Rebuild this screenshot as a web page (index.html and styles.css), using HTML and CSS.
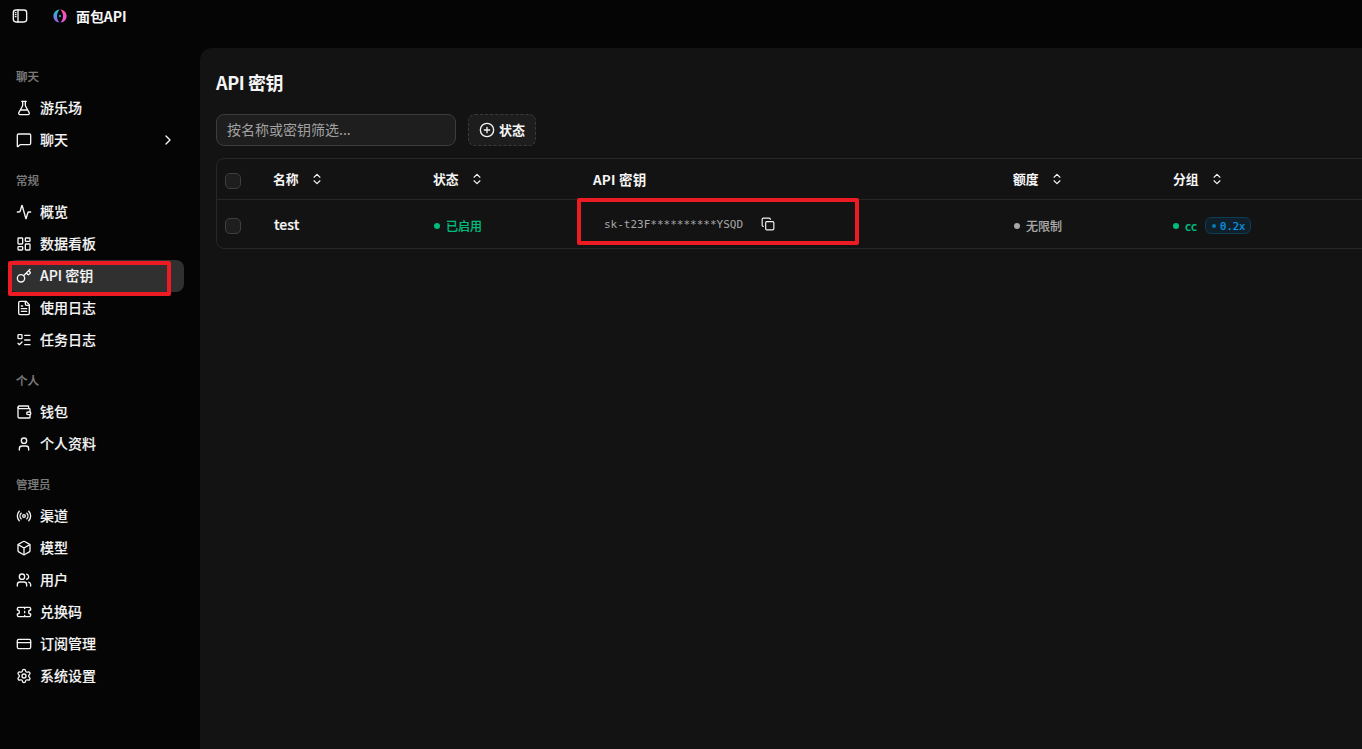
FILE: index.html
```html
<!DOCTYPE html>
<html lang="zh-CN">
<head>
    <meta charset="UTF-8">
    <meta name="viewport" content="width=device-width, initial-scale=1.0">
    <title>面包API</title>
    <link rel="stylesheet" href="styles.css">
</head>
<body>
    <header class="topbar">
        <svg class="icon" viewBox="0 0 24 24"><rect x="2" y="3" width="20" height="18" rx="4"/><path d="M9 3v18M5 7h1M5 10h1M5 13h1"/></svg>
        <svg class="logo" viewBox="0 0 16 16">
            <defs>
                <linearGradient id="cool" x1="0" y1="0" x2="0" y2="1"><stop offset="0" stop-color="#1cc8c8"/><stop offset="1" stop-color="#9a5cf0"/></linearGradient>
                <linearGradient id="warm" x1="0" y1="0" x2="0" y2="1"><stop offset="0" stop-color="#ff4f9a"/><stop offset="1" stop-color="#e65be0"/></linearGradient>
            </defs>
            <path fill="url(#cool)" d="M7.600 1.400C4 1.800 1.400 4.600 1.400 8s2.400 6.200 6 6.600C5.800 12.600 5 10.400 5 8S6 3.400 7.600 1.400z"/>
            <path fill="url(#warm)" d="M8.400 1.400c3.600.4 6.200 3.200 6.200 6.600s-2.400 6.200-6 6.600C10.200 12.600 11 10.400 11 8S10 3.400 8.400 1.400z"/>
            <circle cx="8" cy="8" r="1.200" fill="#1596b0"/>
        </svg>
        <span class="brand">面包API</span>
    </header>

    <div class="layout">
        <nav class="sidebar">
            <div class="group">
                <div class="group-label">聊天</div>
                <a class="item"><svg class="icon" viewBox="0 0 24 24"><path d="M14 2v6a2 2 0 0 0 .245.960l5.510 10.080A2 2 0 0 1 18 22H6a2 2 0 0 1-1.755-2.960l5.510-10.080A2 2 0 0 0 10 8V2M6.453 15h11.094M8.500 2h7"/></svg><span>游乐场</span></a>
                <a class="item"><svg class="icon" viewBox="0 0 24 24"><path d="M22 17a2 2 0 0 1-2 2H6.828a2 2 0 0 0-1.414.586l-2.202 2.202A.71.71 0 0 1 2 21.286V5a2 2 0 0 1 2-2h16a2 2 0 0 1 2 2z"/></svg><span>聊天</span><svg class="icon chevron" viewBox="0 0 24 24"><path d="m9 18 6-6-6-6"/></svg></a>
            </div>
            <div class="group">
                <div class="group-label">常规</div>
                <a class="item"><svg class="icon" viewBox="0 0 24 24"><path d="M22 12h-2.480a2 2 0 0 0-1.930 1.460l-2.350 8.360a.25.25 0 0 1-.480 0L9.240 2.180a.25.25 0 0 0-.480 0l-2.350 8.360A2 2 0 0 1 4.490 12H2"/></svg><span>概览</span></a>
                <a class="item"><svg class="icon" viewBox="0 0 24 24"><rect width="7" height="9" x="3" y="3" rx="1"/><rect width="7" height="5" x="14" y="3" rx="1"/><rect width="7" height="9" x="14" y="12" rx="1"/><rect width="7" height="5" x="3" y="16" rx="1"/></svg><span>数据看板</span></a>
                <a class="item active"><svg class="icon" viewBox="0 0 24 24"><path d="m15.500 7.500 2.300 2.300a1 1 0 0 0 1.400 0l2.100-2.100a1 1 0 0 0 0-1.400L19 4M21 2l-9.600 9.600"/><circle cx="7.500" cy="15.500" r="5.500"/></svg><span>API 密钥</span></a>
                <a class="item"><svg class="icon" viewBox="0 0 24 24"><path d="M15 2H6a2 2 0 0 0-2 2v16a2 2 0 0 0 2 2h12a2 2 0 0 0 2-2V7z"/><path d="M14 2v4a2 2 0 0 0 2 2h4M10 9H8M16 13H8M16 17H8"/></svg><span>使用日志</span></a>
                <a class="item"><svg class="icon" viewBox="0 0 24 24"><rect x="3" y="4" width="6" height="6" rx="1"/><path d="m3 17 2 2 4-4M13 5h8M13 12h8M13 19h8"/></svg><span>任务日志</span></a>
            </div>
            <div class="group">
                <div class="group-label">个人</div>
                <a class="item"><svg class="icon" viewBox="0 0 24 24"><path d="M19 7V4a1 1 0 0 0-1-1H5a2 2 0 0 0 0 4h15a1 1 0 0 1 1 1v4h-3a2 2 0 0 0 0 4h3a1 1 0 0 0 1-1v-2a1 1 0 0 0-1-1"/><path d="M3 5v14a2 2 0 0 0 2 2h15a1 1 0 0 0 1-1v-4"/></svg><span>钱包</span></a>
                <a class="item"><svg class="icon" viewBox="0 0 24 24"><path d="M19 21v-2a4 4 0 0 0-4-4H9a4 4 0 0 0-4 4v2"/><circle cx="12" cy="7" r="4"/></svg><span>个人资料</span></a>
            </div>
            <div class="group">
                <div class="group-label">管理员</div>
                <a class="item"><svg class="icon" viewBox="0 0 24 24"><path d="M16.247 7.761a6 6 0 0 1 0 8.478M19.075 4.933a10 10 0 0 1 0 14.134M4.925 19.067a10 10 0 0 1 0-14.134M7.753 16.239a6 6 0 0 1 0-8.478"/><circle cx="12" cy="12" r="2"/></svg><span>渠道</span></a>
                <a class="item"><svg class="icon" viewBox="0 0 24 24"><path d="M21 8a2 2 0 0 0-1-1.730l-7-4a2 2 0 0 0-2 0l-7 4A2 2 0 0 0 3 8v8a2 2 0 0 0 1 1.730l7 4a2 2 0 0 0 2 0l7-4A2 2 0 0 0 21 16z"/><path d="m3.300 7 8.700 5 8.700-5M12 22V12"/></svg><span>模型</span></a>
                <a class="item"><svg class="icon" viewBox="0 0 24 24"><path d="M16 21v-2a4 4 0 0 0-4-4H6a4 4 0 0 0-4 4v2M16 3.128a4 4 0 0 1 0 7.744M22 21v-2a4 4 0 0 0-3-3.870"/><circle cx="9" cy="7" r="4"/></svg><span>用户</span></a>
                <a class="item"><svg class="icon" viewBox="0 0 24 24"><path d="M2 9a3 3 0 0 1 0 6v2a2 2 0 0 0 2 2h16a2 2 0 0 0 2-2v-2a3 3 0 0 1 0-6V7a2 2 0 0 0-2-2H4a2 2 0 0 0-2 2zM13 5v2M13 17v2M13 11v2"/></svg><span>兑换码</span></a>
                <a class="item"><svg class="icon" viewBox="0 0 24 24"><rect width="20" height="14" x="2" y="5" rx="2"/><path d="M2 10h20"/></svg><span>订阅管理</span></a>
                <a class="item"><svg class="icon" viewBox="0 0 24 24"><path d="M9.671 4.136a2.340 2.340 0 0 1 4.659 0 2.340 2.340 0 0 0 3.319 1.915 2.340 2.340 0 0 1 2.330 4.033 2.340 2.340 0 0 0 0 3.831 2.340 2.340 0 0 1-2.330 4.033 2.340 2.340 0 0 0-3.319 1.915 2.340 2.340 0 0 1-4.659 0 2.340 2.340 0 0 0-3.320-1.915 2.340 2.340 0 0 1-2.330-4.033 2.340 2.340 0 0 0 0-3.831A2.340 2.340 0 0 1 6.350 6.051a2.340 2.340 0 0 0 3.319-1.915"/><circle cx="12" cy="12" r="3"/></svg><span>系统设置</span></a>
            </div>
            <div class="marker marker-nav"></div>
        </nav>

        <main class="content">
            <h1>API 密钥</h1>
            <div class="toolbar">
                <input class="search" type="text" placeholder="按名称或密钥筛选...">
                <button class="filter"><svg class="icon" viewBox="0 0 24 24"><circle cx="12" cy="12" r="10"/><path d="M8 12h8M12 8v8"/></svg><span>状态</span></button>
            </div>

            <div class="table">
                <div class="row head">
                    <div class="cell"><span class="checkbox"></span></div>
                    <div class="cell"><span>名称</span><svg class="icon sort" viewBox="0 0 24 24"><path d="m7 15 5 5 5-5M7 9l5-5 5 5"/></svg></div>
                    <div class="cell"><span>状态</span><svg class="icon sort" viewBox="0 0 24 24"><path d="m7 15 5 5 5-5M7 9l5-5 5 5"/></svg></div>
                    <div class="cell key-title">API 密钥</div>
                    <div class="cell"><span>额度</span><svg class="icon sort" viewBox="0 0 24 24"><path d="m7 15 5 5 5-5M7 9l5-5 5 5"/></svg></div>
                    <div class="cell"><span>分组</span><svg class="icon sort" viewBox="0 0 24 24"><path d="m7 15 5 5 5-5M7 9l5-5 5 5"/></svg></div>
                </div>
                <div class="row">
                    <div class="cell"><span class="checkbox"></span></div>
                    <div class="cell name">test</div>
                    <div class="cell"><span class="status green">已启用</span></div>
                    <div class="cell key">
                        <span class="key-text">sk-t23F**********YSQD</span>
                        <svg class="icon copy" viewBox="0 0 24 24"><rect width="14" height="14" x="8" y="8" rx="2"/><path d="M4 16c-1.100 0-2-.9-2-2V4c0-1.100.9-2 2-2h10c1.100 0 2 .9 2 2"/></svg>
                        <div class="marker marker-key"></div>
                    </div>
                    <div class="cell"><span class="status gray">无限制</span></div>
                    <div class="cell"><span class="status green group-name">cc</span><span class="ratio">0.2x</span></div>
                </div>
            </div>
        </main>
    </div>
</body>
</html>
```

FILE: styles.css
```css
* {
    box-sizing: border-box;
}
body {
    margin: 0;
    height: 100vh;
    overflow: hidden;
    display: flex;
    flex-direction: column;
    background: #050505;
    color: #f5f5f5;
    font-family: "Noto Sans CJK SC", sans-serif;
    font-size: 14px;
    font-weight: 500;
}
.icon {
    width: 16px;
    height: 16px;
    flex-shrink: 0;
    fill: none;
    stroke: currentColor;
    stroke-width: 2;
    stroke-linecap: round;
    stroke-linejoin: round;
}

/* Top bar */
.topbar {
    height: 48px;
    padding: 0 12px 16px;
    display: flex;
    align-items: center;
}
.logo {
    width: 16px;
    height: 16px;
    margin: 0 8px 0 24px;
}
.brand {
    font-size: 14px;
    font-weight: 700;
    letter-spacing: -0.1px;
}

.layout {
    flex: 1;
    display: flex;
    min-height: 0;
}

/* Sidebar */
.sidebar {
    position: relative;
    width: 200px;
    flex-shrink: 0;
    padding: 12px 16px 0 8px;
}
.group {
    margin-bottom: 8px;
}
.group-label {
    height: 32px;
    padding: 0 8px;
    line-height: 32px;
    font-size: 11.5px;
    color: #7c7c7c;
    -webkit-text-stroke: 0.2px;
}
.item {
    height: 32px;
    padding: 0 8px;
    display: flex;
    align-items: center;
    gap: 8px;
    border-radius: 8px;
}
.item span {
    padding-bottom: 2px;
    -webkit-text-stroke: 0.12px;
}
.active {
    background: #303030;
}
.chevron {
    margin-left: auto;
}

/* Content */
.content {
    flex: 1;
    min-width: 0;
    padding: 19px 0 0 16px;
    background: #131313;
    border-top-left-radius: 12px;
    overflow: hidden;
}
h1 {
    margin: 0 0 17px;
    height: 30px;
    line-height: 30px;
    font-size: 18px;
    font-weight: 700;
    letter-spacing: -0.4px;
}
.toolbar {
    display: flex;
    gap: 12px;
    margin-bottom: 12px;
}
.search {
    width: 240px;
    height: 32px;
    padding: 0 10px 2px;
    border: 1px solid #3d3d3d;
    border-radius: 8px;
    background: #1e1e1e;
    font: inherit;
    font-weight: 400;
}
.search::placeholder {
    color: #a1a1a1;
}
.filter {
    width: 68px;
    height: 32px;
    padding: 0;
    display: flex;
    align-items: center;
    justify-content: center;
    gap: 4px;
    border: 1px dashed #3a3a3a;
    border-radius: 7px;
    background: #1d1d1d;
    color: #f5f5f5;
    font: inherit;
    font-size: 13px;
    font-weight: 700;
}
.filter span,
.head span:not(.checkbox) {
    padding-bottom: 2px;
}

/* Table runs past the right edge of the window */
.table {
    width: 1300px;
    border: 1px solid #272727;
    border-radius: 8px;
}
.row {
    display: grid;
    grid-template-columns: 48px 160px 160px 420px 160px 1fr;
    height: 48px;
}
.head {
    height: 41px;
    border-bottom: 1px solid #272727;
    font-size: 12.800px;
    font-weight: 700;
}
.cell {
    padding: 0 8px;
    display: flex;
    align-items: center;
}
.checkbox {
    width: 16px;
    height: 16px;
    margin-top: 4px;
    border: 1px solid #3f3f3f;
    border-radius: 5px;
    background: #1e1e1e;
}
.sort {
    width: 14px;
    height: 14px;
    margin-left: 11.800px;
}
.key-title {
    font-size: 13.500px;
    letter-spacing: 0.2px;
}
.name {
    padding-left: 9px;
    -webkit-text-stroke: 0.2px;
}
.status {
    display: flex;
    align-items: center;
    gap: 6px;
    margin: 3px 0 0 1px;
    font-size: 12px;
    -webkit-text-stroke: 0.15px;
}
.status::before {
    content: "";
    width: 6px;
    height: 6px;
    border-radius: 50%;
    background: currentColor;
}
.green {
    color: #00bc7d;
}
.gray {
    color: #a8a8a8;
}
.key {
    position: relative;
}
.key-text {
    margin-left: 11px;
    font-family: "DejaVu Sans Mono", monospace;
    font-size: 11px;
    font-weight: 400;
    color: #a8a8a8;
}
.copy {
    width: 14px;
    height: 14px;
    margin-left: 18px;
}
.group-name {
    margin-left: 0;
}
.ratio {
    display: flex;
    align-items: center;
    gap: 4px;
    width: 46px;
    height: 17px;
    margin: 3px 0 0 8px;
    padding-left: 6px;
    border: 1px solid #0d3d55;
    border-radius: 6px;
    background: #10202a;
    color: #0a9be6;
    font-family: "DejaVu Sans Mono", monospace;
    font-size: 10.500px;
    -webkit-text-stroke: 0.2px;
}
.ratio::before {
    content: "";
    width: 4px;
    height: 4px;
    border-radius: 50%;
    background: #0879b3;
}

/* Red highlight frames */
.marker {
    position: absolute;
    border: 4px solid #ed1c24;
    border-radius: 2px;
    pointer-events: none;
}
.marker-nav {
    left: 8px;
    top: 213px;
    width: 163px;
    height: 35px;
}
.marker-key {
    left: -8px;
    top: -2px;
    width: 282px;
    height: 47px;
}
```
